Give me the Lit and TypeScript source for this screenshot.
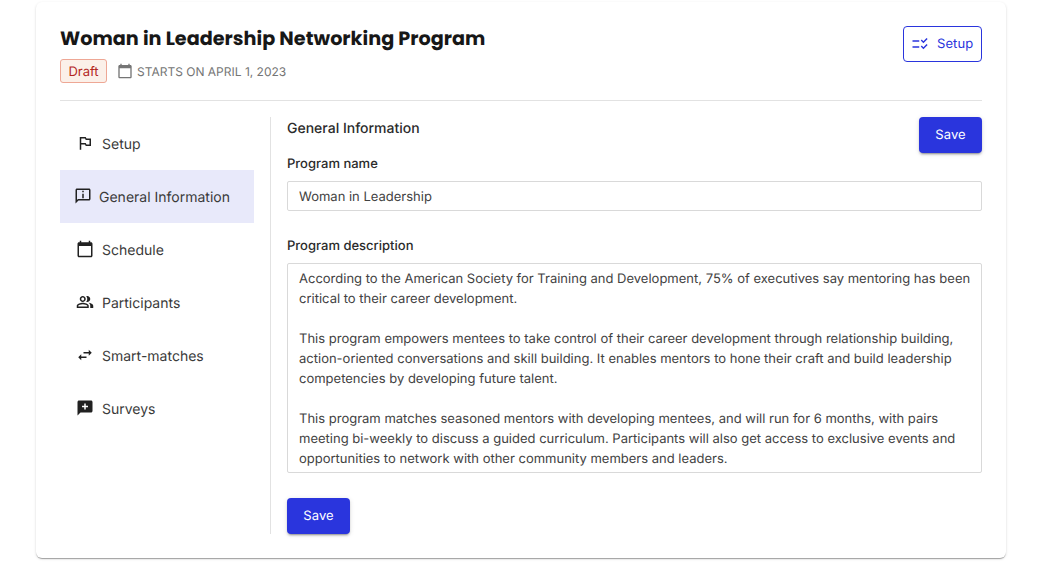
import { css, html, LitElement, svg } from "lit";
import { customElement, state } from "lit/decorators.js";

const ICONS = {
  flag: "M14 6l-1-2H5v17h2v-7h5l1 2h7V6h-6zm4 8h-4l-1-2H7V6h5l1 2h5v6z",
  info: "M20 2H4c-1.1 0-1.99.9-1.99 2L2 22l4-4h14c1.1 0 2-.9 2-2V4c0-1.1-.9-2-2-2zm0 14H5.17L4 17.17V4h16v12zM11 5h2v2h-2zm0 4h2v6h-2z",
  calendar: "M20 3h-1V1h-2v2H7V1H5v2H4c-1.1 0-2 .9-2 2v16c0 1.1.9 2 2 2h16c1.1 0 2-.9 2-2V5c0-1.1-.9-2-2-2zm0 18H4V8h16v13z",
  people: "M16.67 13.13C18.04 14.06 19 15.32 19 17v3h4v-3c0-2.18-3.57-3.47-6.33-3.87zM15 12c2.21 0 4-1.79 4-4s-1.79-4-4-4c-.47 0-.91.1-1.33.24C14.5 5.27 15 6.58 15 8s-.5 2.73-1.33 3.76c.42.14.86.24 1.33.24zM9 12c2.21 0 4-1.79 4-4s-1.79-4-4-4-4 1.79-4 4 1.79 4 4 4zm0-6c1.1 0 2 .9 2 2s-.9 2-2 2-2-.9-2-2 .9-2 2-2zM9 13c-2.67 0-8 1.34-8 4v3h16v-3c0-2.66-5.33-4-8-4zm6 5H3v-.99C3.2 16.29 6.3 15 9 15s5.8 1.29 6 2v1z",
  swap: "M6.99 11L3 15l3.99 4v-3H14v-2H6.99v-3zM21 9l-3.99-4v3H10v2h7.01v3L21 9z",
  survey: "M20 2H4c-1.1 0-2 .9-2 2v18l4-4h14c1.1 0 2-.9 2-2V4c0-1.1-.9-2-2-2zm-4 9h-3v3h-2v-3H8V9h3V6h2v3h3v2z",
  checklist: "M11 7H2v2h9V7zm0 8H2v2h9v-2zM16.54 11 13 7.46l1.41-1.41 2.12 2.12 4.24-4.24 1.41 1.41L16.54 11zm0 8L13 15.46l1.41-1.41 2.12 2.12 4.24-4.24 1.41 1.41L16.54 19z",
};

type IconName = keyof typeof ICONS;

const icon = (name: IconName, cls = "") => html`<svg class="icon ${cls}" viewBox="0 0 24 24" fill="currentColor">${svg`<path d=${ICONS[name]}></path>`}</svg>`;

const NAV: { label: string; icon: IconName }[] = [
  { label: "Setup", icon: "flag" },
  { label: "General Information", icon: "info" },
  { label: "Schedule", icon: "calendar" },
  { label: "Participants", icon: "people" },
  { label: "Smart-matches", icon: "swap" },
  { label: "Surveys", icon: "survey" },
];

const DESCRIPTION = `According to the American Society for Training and Development, 75% of executives say mentoring has been critical to their career development.

This program empowers mentees to take control of their career development through relationship building, action-oriented conversations and skill building. It enables mentors to hone their craft and build leadership competencies by developing future talent.

This program matches seasoned mentors with developing mentees, and will run for 6 months, with pairs meeting bi-weekly to discuss a guided curriculum. Participants will also get access to exclusive events and opportunities to network with other community members and leaders.`;

@customElement("app-root")
export class AppRoot extends LitElement {
  @state()
  active = "General Information";

  render() {
    return html`
      <div class="card">
        <header class="head">
          <div>
            <h1>Woman in Leadership Networking Program</h1>
            <div class="meta">
              <span class="badge">Draft</span>
              <span class="date">${icon("calendar", "date-icon")}<span>STARTS ON APRIL 1, 2023</span></span>
            </div>
          </div>
          <button class="outline">${icon("checklist", "check-icon")}Setup</button>
        </header>

        <div class="body">
          <nav class="side">
            ${NAV.map(
              (n) => html`
                <a class="item ${n.label === this.active ? "active" : ""}" @click=${() => (this.active = n.label)}>
                  ${icon(n.icon)}<span>${n.label}</span>
                </a>
              `
            )}
          </nav>

          <main class="form">
            <div class="form-top">
              <h2>General Information</h2>
              <button class="primary">Save</button>
            </div>
            <label class="name-label" for="name">Program name</label>
            <input id="name" .value=${"Woman in Leadership"} />
            <label class="desc-label" for="desc">Program description</label>
            <textarea id="desc" .value=${DESCRIPTION}></textarea>
            <div class="form-end"><button class="primary">Save</button></div>
          </main>
        </div>
      </div>
    `;
  }

  static styles = css`
    :host {
      display: block;
      padding-bottom: 4px;
      font-family: Inter, "Liberation Sans", sans-serif;
      font-size: 14px;
      line-height: 20px;
      color: #2b2b2b;
      text-rendering: geometricPrecision;
    }

    * {
      box-sizing: border-box;
    }

    .card {
      margin: 2px 36px 0;
      height: 556px;
      padding: 24px;
      background: #fff;
      border-radius: 6px;
      box-shadow: 0 2px 1px -1px rgba(0, 0, 0, 0.2), 0 1px 1px 0 rgba(0, 0, 0, 0.14), 0 1px 3px 0 rgba(0, 0, 0, 0.12);
    }

    .head {
      display: flex;
      justify-content: space-between;
      align-items: flex-start;
      height: 75px;
      border-bottom: 1px solid #e2e2e2;
    }

    h1 {
      margin: 0;
      font-family: Poppins, Inter, sans-serif;
      font-size: 19.2px;
      line-height: 26px;
      font-weight: 700;
      letter-spacing: 0.025px;
      color: #171717;
    }

    .meta {
      display: flex;
      align-items: center;
      margin-top: 7px;
    }

    .badge {
      width: 47px;
      height: 24px;
      line-height: 24px;
      text-align: center;
      font-size: 13px;
      color: #b3261e;
      background: #fbf0e9;
      border: 1px solid #eea795;
      border-radius: 3px;
    }

    .date {
      display: flex;
      align-items: center;
      margin-left: 10px;
      font-size: 12px;
      color: #757575;
    }

    .date span {
      margin-top: 2px;
    }

    .icon {
      display: block;
      flex: none;
      width: 18px;
      height: 18px;
    }

    .date-icon {
      width: 16px;
      height: 16px;
      margin-right: 4px;
    }

    button {
      font: inherit;
      text-rendering: geometricPrecision;
      letter-spacing: 0.1px;
      cursor: pointer;
      border-radius: 4px;
    }

    .outline {
      display: flex;
      align-items: center;
      width: 79px;
      height: 36px;
      padding: 0 0 0 7px;
      color: #2a35dd;
      background: #fff;
      border: 1px solid #2a35dd;
      font-size: 13px;
    }

    .check-icon {
      margin-right: 8px;
    }

    .primary {
      width: 63px;
      height: 36px;
      padding: 0;
      color: #fff;
      font-size: 13px;
      background: #2a35dd;
      border: 0;
      box-shadow: 0 3px 1px -2px rgba(0, 0, 0, 0.2), 0 2px 2px 0 rgba(0, 0, 0, 0.14), 0 1px 5px 0 rgba(0, 0, 0, 0.12);
    }

    .body {
      display: flex;
      margin-top: 16px;
      height: 417px;
    }

    .side {
      flex: none;
      width: 211px;
      padding-right: 16px;
      border-right: 1px solid #e2e2e2;
    }

    .item {
      display: flex;
      align-items: center;
      gap: 8px;
      height: 53px;
      padding-left: 16px;
      color: #3a3a3a;
      cursor: pointer;
    }

    .item .icon {
      margin-top: -1px;
      color: #212121;
    }

    .item span {
      margin-top: 2px;
    }

    .item.active {
      background: #e8e9fa;
      padding-left: 14px;
      gap: 7px;
    }

    .form {
      flex: 1;
      min-width: 0;
      padding-left: 16px;
    }

    .form-top {
      display: flex;
      justify-content: space-between;
      height: 36px;
    }

    h2 {
      margin: 2px 0 0;
      font-size: 14px;
      line-height: 20px;
      font-weight: 500;
    }

    label {
      display: block;
      padding-top: 1px;
      font-weight: 500;
      font-size: 13px;
      line-height: 20px;
    }

    .name-label {
      margin-bottom: 7px;
    }

    .desc-label {
      margin-top: 24px;
      margin-bottom: 7px;
    }

    input,
    textarea {
      display: block;
      width: 100%;
      margin: 0;
      padding: 5px 8px 5px 11px;
      font: inherit;
      font-size: 13px;
      text-rendering: geometricPrecision;
      color: #424242;
      background: #fff;
      border: 1px solid #d9d9d9;
      border-radius: 2px;
      outline: none;
      resize: none;
    }

    input {
      height: 30px;
      padding-top: 6px;
      padding-bottom: 4px;
    }

    textarea {
      height: 210px;
      overflow: hidden;
    }

    .form-end {
      margin-top: 25px;
    }
  `;
}
